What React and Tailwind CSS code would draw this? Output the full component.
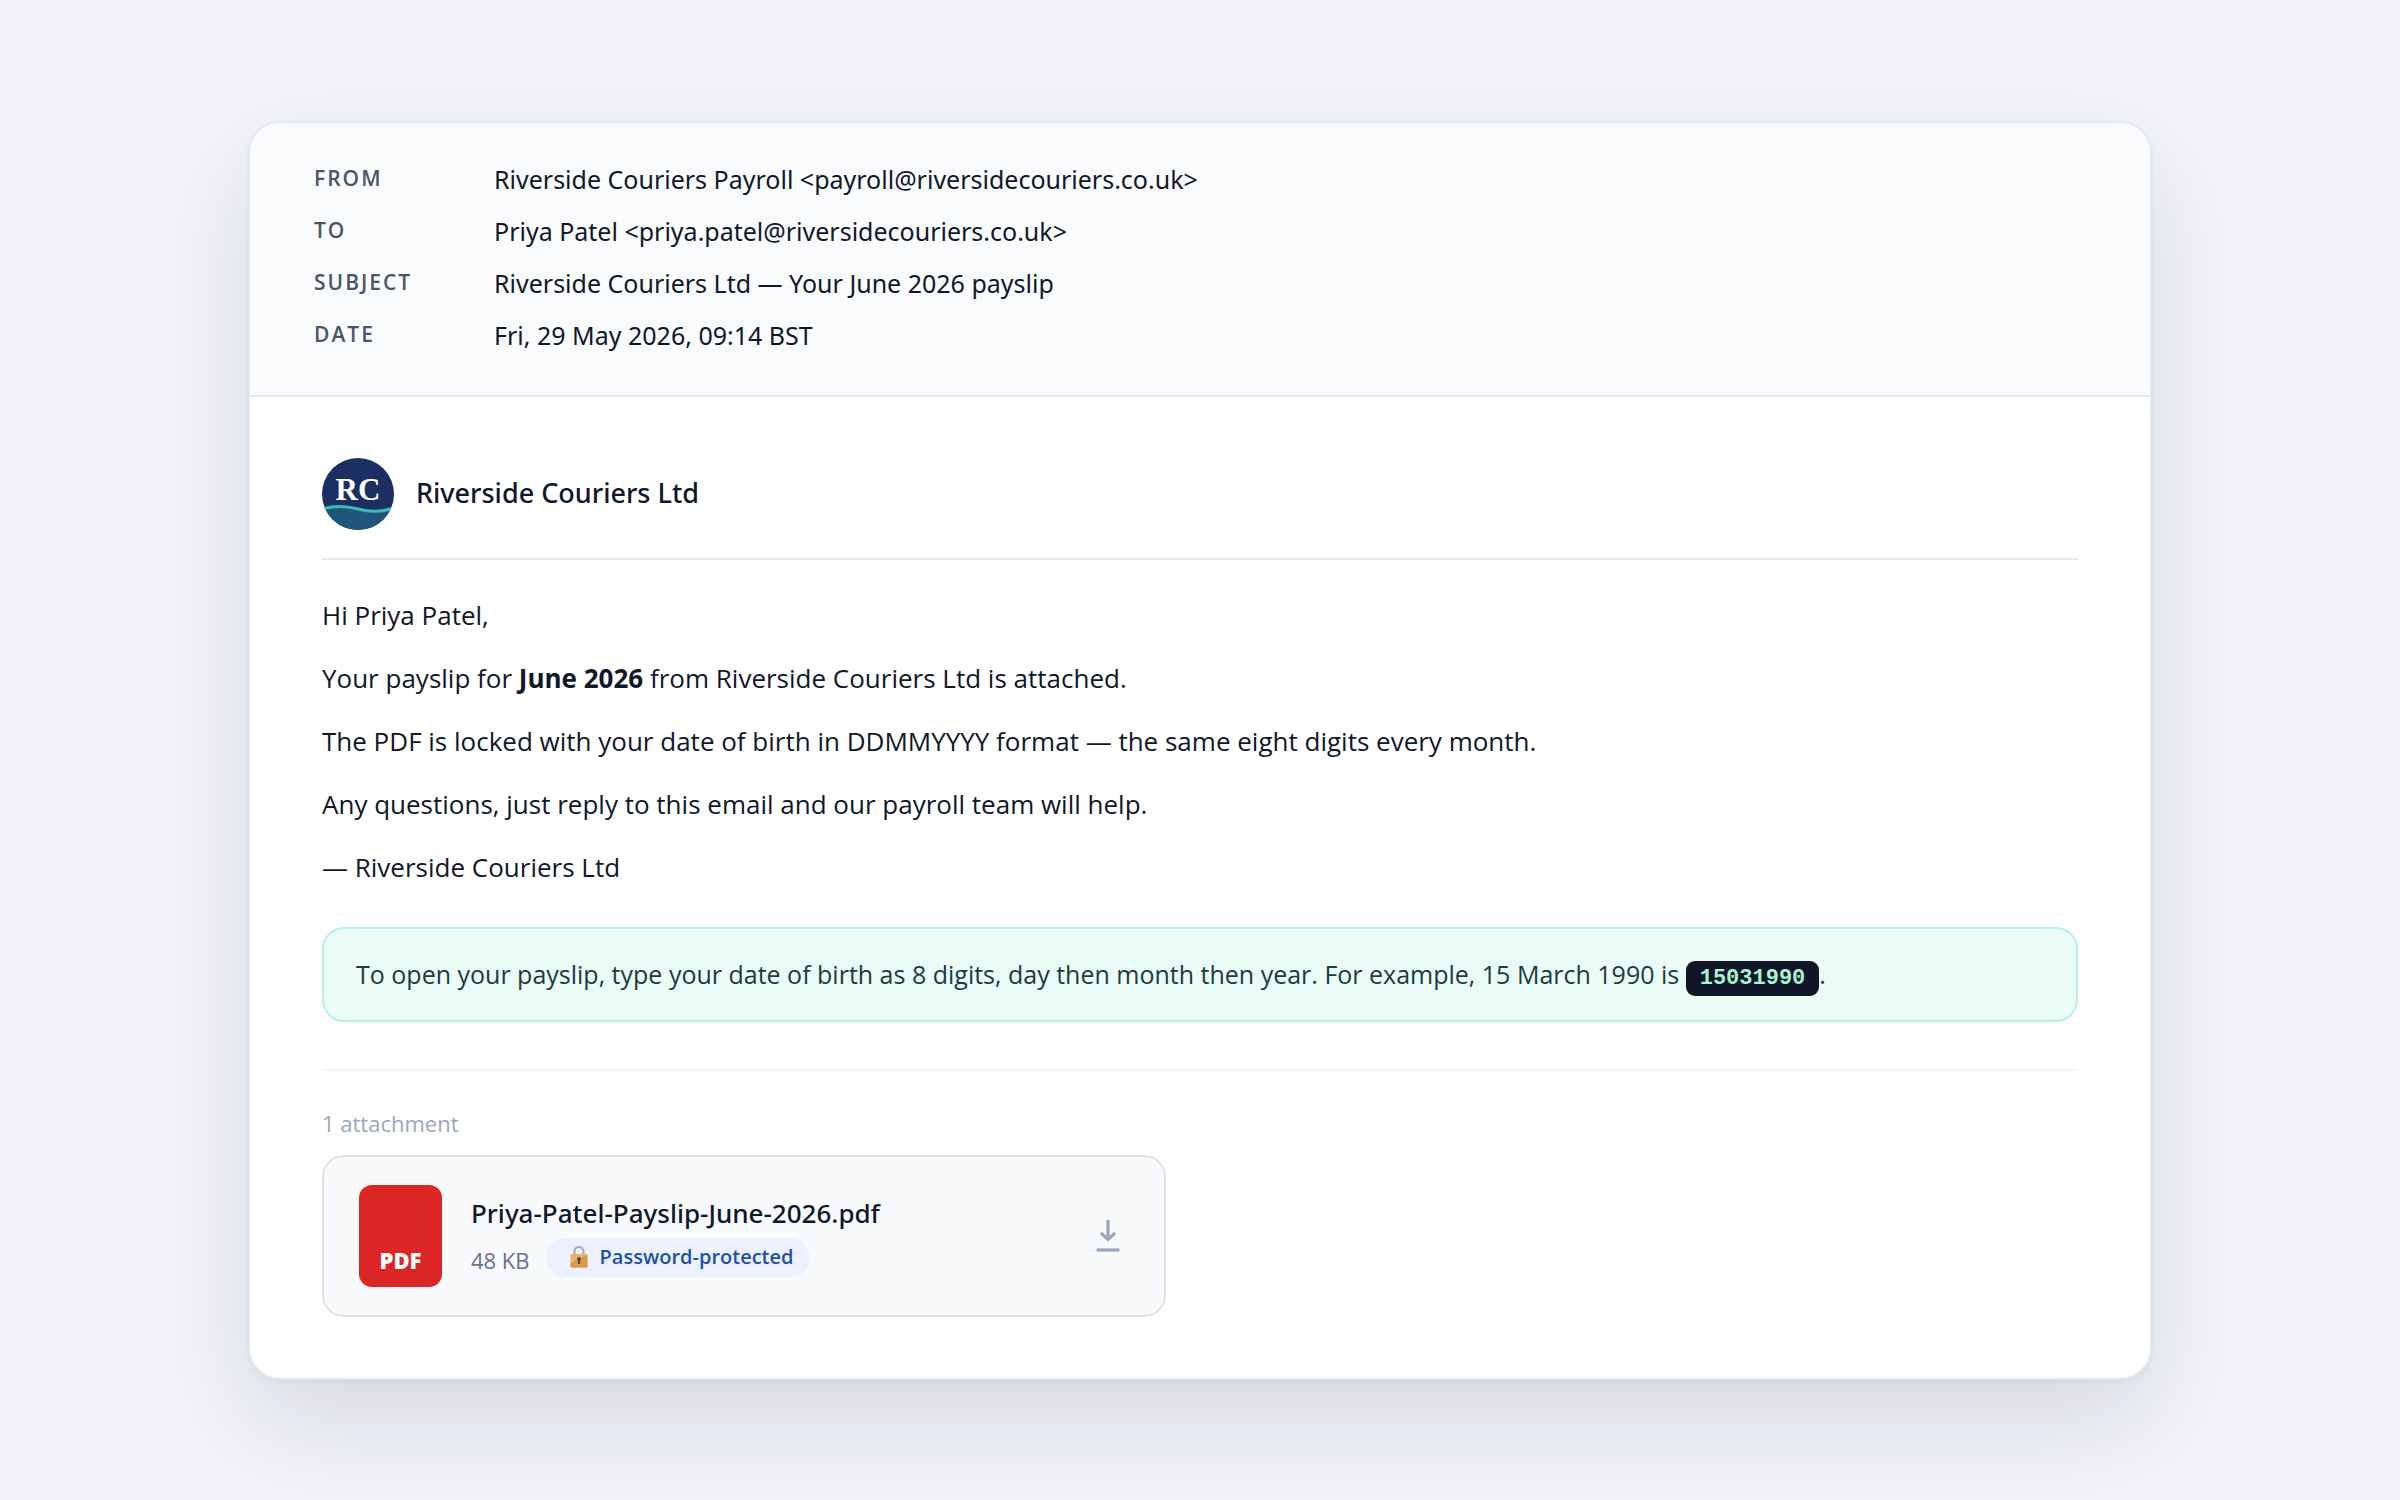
import React from "react";

const headers = [
  ["From", "Riverside Couriers Payroll <payroll@riversidecouriers.co.uk>"],
  ["To", "Priya Patel <priya.patel@riversidecouriers.co.uk>"],
  ["Subject", "Riverside Couriers Ltd — Your June 2026 payslip"],
  ["Date", "Fri, 29 May 2026, 09:14 BST"],
];

function Logo() {
  return (
    <svg viewBox="0 0 72 72" className="size-[72px] shrink-0" role="img" aria-label="Riverside Couriers logo">
      <defs>
        <clipPath id="logo-disc">
          <circle cx="36" cy="36" r="36" />
        </clipPath>
      </defs>
      <g clipPath="url(#logo-disc)">
        <rect width="72" height="72" fill="#1b2f63" />
        <path d="M0 51 Q18 46 36 51 T72 50 V72 H0 Z" fill="#20557c" />
        <path d="M0 51 Q18 46 36 51 T72 50" fill="none" stroke="#38bdb4" strokeWidth="3" />
      </g>
      <text
        x="36"
        y="42"
        textAnchor="middle"
        fill="#ffffff"
        fontSize="31"
        fontWeight="700"
        fontFamily="'Liberation Serif', serif"
      >
        RC
      </text>
    </svg>
  );
}

function Lock() {
  return (
    <svg viewBox="0 0 18 22" className="h-[22px] w-[18px] shrink-0" aria-hidden="true">
      <path d="M4.5 9 V5.5 a4.5 4.5 0 0 1 9 0 V9" fill="none" stroke="#a3abb8" strokeWidth="2" />
      <rect x="0.5" y="8" width="17" height="13.5" rx="1.5" fill="#f0b060" />
      <path d="M17.5 9 V20 a1.5 1.5 0 0 1 -1.5 1.5 H2 A1.5 1.5 0 0 1 0.5 20 V17 Z" fill="#db9650" />
      <circle cx="9" cy="13" r="2" fill="#4a4a5c" />
      <rect x="8" y="13" width="2" height="5" fill="#4a4a5c" />
    </svg>
  );
}

export default function App() {
  return (
    <main className="flex min-h-screen items-center justify-center bg-[#f3f5fa] px-6 font-['Open_Sans',sans-serif] text-[#0f172a]">
      <article className="w-full max-w-[1904px] overflow-hidden rounded-[32px] border-2 border-slate-200 bg-white shadow-[0_2px_4px_rgba(15,23,42,0.05),0_43px_108px_rgba(15,23,42,0.13)]">
        <header className="border-b-2 border-slate-200 bg-[#fafbfd] px-16 pt-[38px] pb-[42px] font-['Noto_Sans',sans-serif]">
          <dl className="grid grid-cols-[180px_1fr] gap-y-4">
            {headers.map(([label, value]) => (
              <React.Fragment key={label}>
                <dt className="font-['Open_Sans',sans-serif] text-[21px] leading-[34px] font-semibold tracking-[2px] text-[#4b5566] uppercase">
                  {label}
                </dt>
                <dd className="text-[25px] leading-9">{value}</dd>
              </React.Fragment>
            ))}
          </dl>
        </header>

        <div className="px-[72px] py-[61px]">
          <div className="flex items-center gap-[22px] border-b-2 border-slate-200 pb-7">
            <Logo />
            <h1 className="font-['Noto_Sans',sans-serif] text-[27px] font-medium">Riverside Couriers Ltd</h1>
          </div>

          <div className="mt-[34px] flex flex-col gap-[21px] text-[26px] leading-[42px]">
            <p>Hi Priya Patel,</p>
            <p>
              Your payslip for <strong className="font-bold">June 2026</strong> from Riverside Couriers Ltd is attached.
            </p>
            <p>The PDF is locked with your date of birth in DDMMYYYY format — the same eight digits every month.</p>
            <p>Any questions, just reply to this email and our payroll team will help.</p>
            <p>— Riverside Couriers Ltd</p>
          </div>

          <p className="mt-[39px] rounded-[22px] border-2 border-[#b8f1dc] bg-[#eafcf5] px-8 py-[25px] text-[25px] leading-[41px] text-[#1e3a3f]">
            To open your payslip, type your date of birth as 8 digits, day then month then year. For example, 15 March
            1990 is{" "}
            <code className="rounded-[9px] bg-[#101528] px-3.5 py-[5px] font-['Liberation_Mono',monospace] text-[22px] leading-6 font-bold text-[#a7f3d0]">
              15031990
            </code>
            .
          </p>

          <section className="mt-[47px] border-t-2 border-slate-100 pt-[37px]">
            <h2 className="text-[22px] leading-[30px] text-[#9ca6ba]">1 attachment</h2>
            <div className="mt-[17px] flex max-w-[844px] items-center rounded-[22px] border-2 border-[#dde1e8] bg-[#f9fafc] px-[35px] py-7">
              <div className="flex h-[102px] w-[83px] shrink-0 items-end justify-center rounded-[13px] bg-[#dc2626] pb-3 text-[22px] leading-[30px] font-extrabold text-white">
                PDF
              </div>
              <div className="ml-[29px] flex-1">
                <p className="font-['Noto_Sans',sans-serif] text-[26px] leading-9 font-medium">
                  Priya-Patel-Payslip-June-2026.pdf
                </p>
                <div className="mt-[7px] flex items-end gap-4">
                  <span className="text-[22px] leading-[34px] text-[#667094]">48 KB</span>
                  <span className="flex h-[39px] items-center gap-3 rounded-full bg-[#edf1fe] pr-4 pl-6 text-[20px] font-semibold text-[#1e50a8]">
                    <Lock />
                    Password-protected
                  </span>
                </div>
              </div>
              <button type="button" aria-label="Download attachment" className="mr-[9px] text-[#9ca6ba]">
                <svg viewBox="0 0 24 34" className="block h-[34px] w-6" fill="none" stroke="currentColor" strokeWidth="3.2">
                  <path d="M12 1 V20 M4.8 13.8 L12 20.5 L19.2 13.8" />
                  <path d="M0.5 31 H23.5" />
                </svg>
              </button>
            </div>
          </section>
        </div>
      </article>
    </main>
  );
}
